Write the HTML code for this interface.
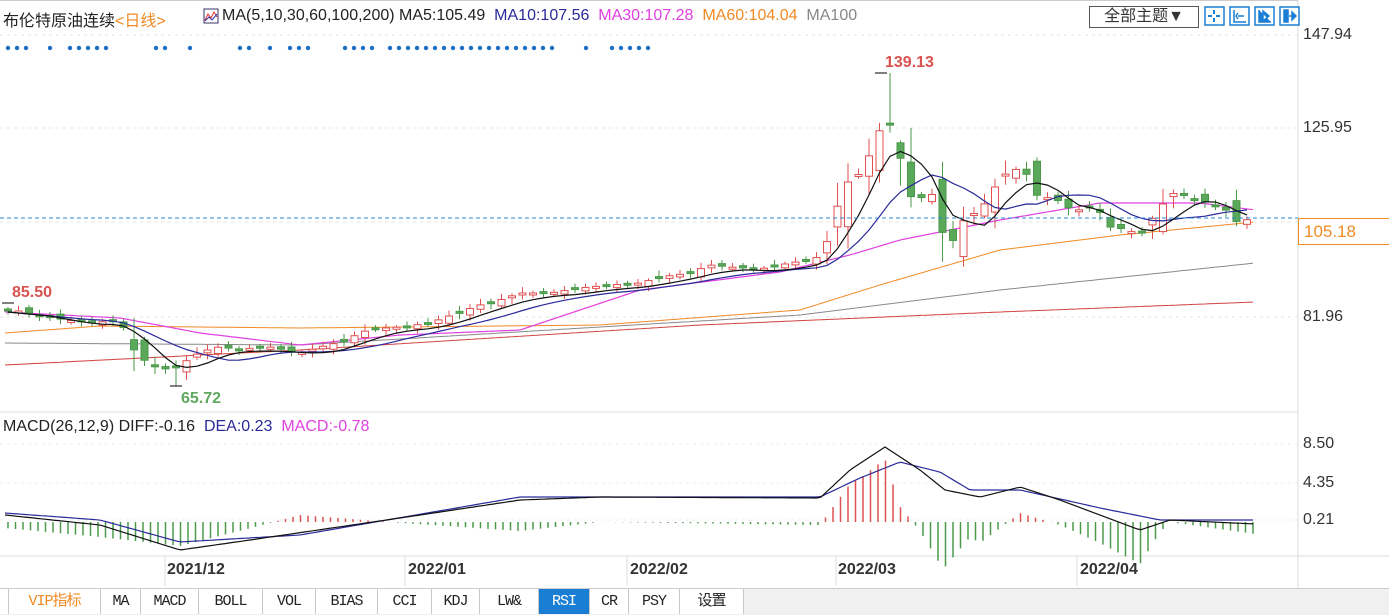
<!DOCTYPE html>
<html><head><meta charset="utf-8">
<style>
body{margin:0;width:1389px;height:615px;background:#fff;overflow:hidden;font-family:"Liberation Sans","Noto Sans CJK SC",sans-serif}
#wrap{position:relative;width:1389px;height:615px}
.t{position:absolute;white-space:nowrap;font-size:16px}
.tabs{position:absolute;left:0;top:588px;height:26px;width:1389px;background:#f0f0f0;border-top:1px solid #ccc}
.tab{position:absolute;top:0;height:25px;line-height:25px;text-align:center;font-family:"Liberation Mono","Noto Sans CJK SC",monospace;font-size:15px;color:#222;border-right:1px solid #c8c8c8;background:#fff;letter-spacing:-1px}
</style></head><body><div id="wrap">
<svg id="s" width="1389" height="615" style="position:absolute;left:0;top:0"></svg>
<div class="t" style="left:3px;top:7px;color:#222">布伦特原油连续<span style="color:#f08a24">&lt;日线&gt;</span></div>
<svg style="position:absolute;left:203px;top:8px" width="16" height="16"><rect x="1" y="1" width="14" height="14" fill="#fff" stroke="#336" /><path d="M2 12 L5 6 L8 10 L11 4 L14 9" stroke="#d33" fill="none"/><path d="M2 13 L6 9 L9 12 L14 6" stroke="#33a" fill="none"/></svg>
<div class="t" style="left:222px;top:7px;color:#222">MA(5,10,30,60,100,200) MA5:105.49 <span style="color:#2a2a9a">&nbsp;MA10:107.56</span> <span style="color:#e040e0">&nbsp;MA30:107.28</span> <span style="color:#f08a24">&nbsp;MA60:104.04</span> <span style="color:#888">&nbsp;MA100</span></div>
<div style="position:absolute;left:1089px;top:6px;width:108px;height:20px;border:1px solid #555;font-size:16px;line-height:20px;text-align:center;color:#333">全部主题▼</div>
<div class="t" style="left:1303px;top:26px;color:#333">147.94</div>
<div class="t" style="left:1303px;top:119px;color:#333">125.95</div>
<div class="t" style="left:1303px;top:308px;color:#333">81.96</div>
<div style="position:absolute;left:1298px;top:218px;width:90px;height:25px;border:1px solid #f08a24;background:#fff;color:#f08a24;font-size:17px;line-height:25px;padding-left:5px">105.18</div>
<div class="t" style="left:885px;top:54px;color:#d9534f;font-weight:bold">139.13</div>
<div class="t" style="left:12px;top:284px;color:#d9534f;font-weight:bold">85.50</div>
<div class="t" style="left:181px;top:390px;color:#5fa85f;font-weight:bold">65.72</div>
<div class="t" style="left:3px;top:418px;color:#222">MACD(26,12,9) DIFF:-0.16 <span style="color:#2a2a9a">&nbsp;DEA:0.23</span> <span style="color:#e040e0">&nbsp;MACD:-0.78</span></div>
<div class="t" style="left:1303px;top:435px;color:#333">8.50</div>
<div class="t" style="left:1303px;top:474px;color:#333">4.35</div>
<div class="t" style="left:1303px;top:511px;color:#333">0.21</div>
<div class="t" style="left:167px;top:561px;color:#333;font-weight:bold">2021/12</div>
<div class="t" style="left:408px;top:561px;color:#333;font-weight:bold">2022/01</div>
<div class="t" style="left:630px;top:561px;color:#333;font-weight:bold">2022/02</div>
<div class="t" style="left:838px;top:561px;color:#333;font-weight:bold">2022/03</div>
<div class="t" style="left:1080px;top:561px;color:#333;font-weight:bold">2022/04</div>
<div class="tabs">
<div class="tab" style="left:0;width:8px"></div>
<div class="tab" style="left:9px;width:91px;color:#f08a24">VIP指标</div>
<div class="tab" style="left:101px;width:39px">MA</div>
<div class="tab" style="left:141px;width:57px">MACD</div>
<div class="tab" style="left:199px;width:63px">BOLL</div>
<div class="tab" style="left:263px;width:52px">VOL</div>
<div class="tab" style="left:316px;width:61px">BIAS</div>
<div class="tab" style="left:378px;width:53px">CCI</div>
<div class="tab" style="left:432px;width:47px">KDJ</div>
<div class="tab" style="left:480px;width:58px">LW&amp;</div>
<div class="tab" style="left:539px;width:50px;background:#1a7fd4;color:#fff">RSI</div>
<div class="tab" style="left:590px;width:38px">CR</div>
<div class="tab" style="left:629px;width:50px">PSY</div>
<div class="tab" style="left:680px;width:63px">设置</div>
</div>
</div>
<script>
(function(){
var s=document.getElementById('s'),h='';
function L(pts,c,w){h+='<polyline fill="none" stroke="'+c+'" stroke-width="'+(w||1)+'" points="'+pts.map(p=>p.join(',')).join(' ')+'"/>';}
function interp(k,x){for(var i=0;i<k.length-1;i++){if(x<=k[i+1][0]){var a=k[i],b=k[i+1];return a[1]+(b[1]-a[1])*(x-a[0])/(b[0]-a[0]);}}return k[k.length-1][1];}
function curve(k,x0,x1){var p=[];for(var x=x0;x<=x1;x+=4)p.push([x,interp(k,x).toFixed(1)]);return p;}
[35,128,222,317].forEach(y=>h+='<line x1="0" x2="1298" y1="'+y+'" y2="'+y+'" stroke="#e6e6e6" stroke-dasharray="3,4"/>');
[444,483,520].forEach(y=>h+='<line x1="0" x2="1298" y1="'+y+'" y2="'+y+'" stroke="#eee" stroke-dasharray="3,4"/>');
h+='<line x1="0" x2="1298" y1="412" y2="412" stroke="#ddd"/>';
h+='<line x1="0" x2="1389" y1="556" y2="556" stroke="#ddd"/>';
[165,405,627,836,1077].forEach(x=>h+='<line x1="'+x+'" x2="'+x+'" y1="556" y2="586" stroke="#ddd"/>');
h+='<line x1="1298" x2="1298" y1="0" y2="588" stroke="#ddd"/>';
h+='<line x1="0" x2="1298" y1="0.5" y2="0.5" stroke="#ccc"/>';
var dx=[8,17,26,50,70,79,88,97,106,156,165,190,240,249,270,290,299,308,345,354,363,372,390,399,408,417,426,435,444,453,462,471,480,489,498,507,516,525,534,543,552,586,612,621,630,639,648];
dx.forEach(x=>h+='<circle cx="'+x+'" cy="48" r="2.2" fill="#1a6fc0"/>');
var K=[[8,312],[40,318],[60,322],[90,326],[120,323],[135,355],[150,368],[165,372],[180,368],[195,358],[215,350],[240,352],[270,350],[300,356],[320,350],[340,345],[370,332],[400,330],[430,326],[460,315],[480,308],[500,303],[520,296],[550,296],[580,291],[610,288],[640,286],[660,280],[690,276],[710,268],[730,270],[760,272],[790,266],[815,262],[825,252],[835,215],[848,185],[862,175],[875,145],[885,120],[897,135],[905,195],[918,205],[930,190],[942,235],[955,245],[965,220],[978,215],[990,200],[1000,180],[1015,172],[1028,178],[1040,205],[1052,198],[1065,210],[1080,213],[1095,208],[1110,230],[1125,232],[1140,238],[1150,225],[1162,208],[1175,195],[1188,200],[1200,203],[1212,208],[1225,212],[1237,225],[1250,222]];
var cl=[],xs=[];for(var x=8;x<=1250;x+=10.5){xs.push(x);cl.push(interp(K,x));}
function ma(n){var p=[];for(var i=0;i<cl.length;i++){var a=0,m=Math.min(n,i+1);for(var j=0;j<m;j++)a+=cl[i-j];p.push([xs[i].toFixed(1),(a/m).toFixed(1)]);}return p;}
L(curve([[5,365],[300,350],[700,325],[1000,312],[1255,302]],5,1255),'#d04040',1);
L(curve([[5,343],[300,345],[800,315],[1000,290],[1255,263]],5,1255),'#888',1);
L(curve([[5,333],[100,326],[300,328],[600,325],[800,310],[880,285],[1000,250],[1120,235],[1255,222]],5,1255),'#f08a24',1);
L(curve([[5,312],[120,318],[200,333],[300,345],[400,335],[520,330],[640,290],[780,272],[850,255],[900,240],[1000,220],[1100,203],[1200,203],[1255,210]],5,1255),'#e040e0',1.2);
for(var i=0;i<cl.length;i++){var xx=xs[i],c=cl[i]-3,pc=(i>0?cl[i-1]:cl[i])-3;var vol=Math.abs(c-pc)+2;var o=pc+Math.sin(i*2.3)*vol*0.8;var tp=Math.min(o,c),bt=Math.max(o,c);if(bt-tp<2)bt=tp+2;var hi=tp-2-Math.abs(Math.sin(i*1.7))*vol*0.8,lo=bt+2+Math.abs(Math.cos(i*1.3))*vol*0.8;
if(i==Math.round((885-8)/10.5))hi=73;
if(i==Math.round((176-8)/10.5))lo=386;
var up=c<o;var col=up?'#e05050':'#4a9a4a';
h+='<line x1="'+xx+'" x2="'+xx+'" y1="'+hi+'" y2="'+lo+'" stroke="'+col+'"/>';
h+='<rect x="'+(xx-3.5)+'" y="'+tp+'" width="7" height="'+(bt-tp)+'" fill="'+(up?'#fff':'#5aa85a')+'" stroke="'+col+'"/>';}
h+='<line x1="875" x2="887" y1="73" y2="73" stroke="#000"/><line x1="170" x2="182" y1="386" y2="386" stroke="#000"/><line x1="2" x2="14" y1="303" y2="303" stroke="#000"/>';
L(ma(10),'#2a2a9a',1.2);L(ma(5),'#111',1.2);
h+='<line x1="0" x2="1298" y1="218" y2="218" stroke="#2a8ad4" stroke-dasharray="4,3"/>';
var D=[[5,515],[100,525],[180,550],[250,540],[400,518],[520,500],[600,497],[820,498],[850,470],[885,447],[920,470],[945,490],[980,497],[1020,487],[1060,500],[1100,515],[1140,530],[1170,520],[1255,524]];
var E=[[5,513],[100,520],[180,542],[300,535],[520,497],[820,497],[860,478],[900,462],[940,472],[970,490],[1020,490],[1100,508],[1160,520],[1255,520]];
for(var x2=8;x2<=1255;x2+=7.5){var d=interp(D,x2),e=interp(E,x2),v=2*(d-e);var col2=v<0?'#e05050':'#4a9a4a';h+='<line x1="'+x2+'" x2="'+x2+'" y1="522" y2="'+(522+v*1.5)+'" stroke="'+col2+'" stroke-width="1.5"/>';}
L(curve(E,5,1255),'#2a2a9a',1.2);L(curve(D,5,1255),'#111',1.2);
[1205,1230,1255,1280].forEach(function(x){h+='<rect x="'+x+'" y="7" width="19" height="18" fill="#fff" stroke="#1a7fd4" stroke-width="1.5"/>';});
h+='<path d="M1214 10v4M1214 18v4M1208 16h4M1216 16h4" stroke="#1a7fd4" stroke-width="2"/>';
h+='<path d="M1234 10v12h12M1238 16h6M1238 13l-2 3 2 3" stroke="#1a7fd4" stroke-width="1.5" fill="none"/>';
h+='<path d="M1259 10v12h12M1263 11l6 5-6 5z" stroke="#1a7fd4" stroke-width="1.5" fill="#1a7fd4"/>';
h+='<path d="M1284 10h4v12h-4zM1289 16h6M1292 12l4 4-4 4z" stroke="#1a7fd4" stroke-width="1.5" fill="#1a7fd4"/>';
s.innerHTML=h;
})();
</script>
</body></html>
